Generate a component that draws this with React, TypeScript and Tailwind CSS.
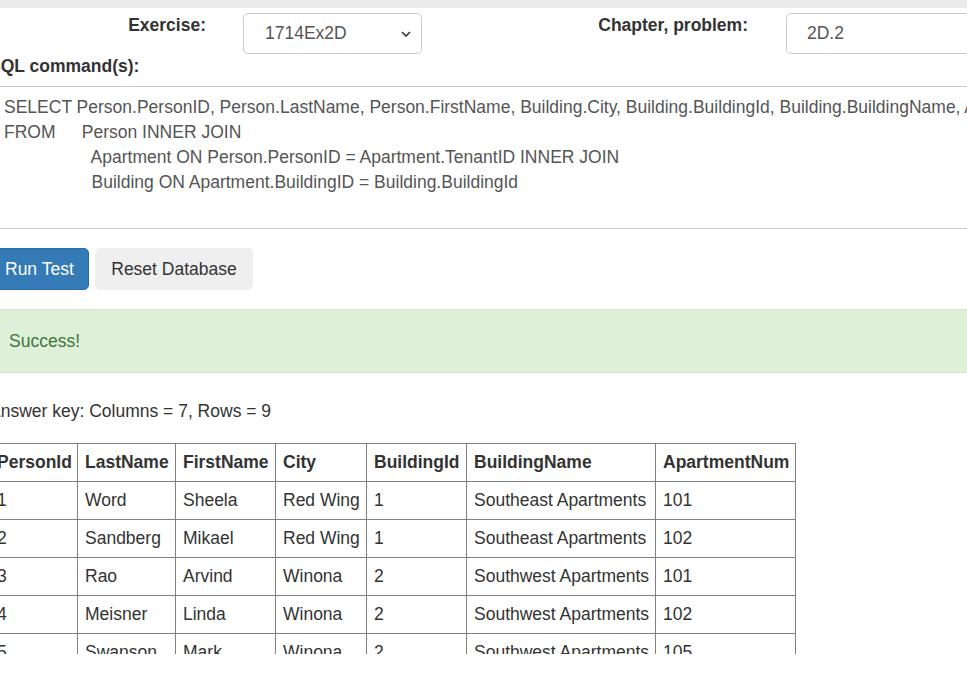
import React from 'react';

const headers = ['PersonId', 'LastName', 'FirstName', 'City', 'BuildingId', 'BuildingName', 'ApartmentNum'];
const colWidths = ['w-[88px]', 'w-[98px]', 'w-[100px]', 'w-[91px]', 'w-[100px]', 'w-[189px]', 'w-[140px]'];

const rows = [
  ['1', 'Word', 'Sheela', 'Red Wing', '1', 'Southeast Apartments', '101'],
  ['2', 'Sandberg', 'Mikael', 'Red Wing', '1', 'Southeast Apartments', '102'],
  ['3', 'Rao', 'Arvind', 'Winona', '2', 'Southwest Apartments', '101'],
  ['4', 'Meisner', 'Linda', 'Winona', '2', 'Southwest Apartments', '102'],
  ['5', 'Swanson', 'Mark', 'Winona', '2', 'Southwest Apartments', '105'],
];

const sql = `SELECT Person.PersonID, Person.LastName, Person.FirstName, Building.City, Building.BuildingId, Building.BuildingName, Apartment.ApartmentNum
FROM\tPerson INNER JOIN
\t\t  Apartment ON Person.PersonID = Apartment.TenantID INNER JOIN
\t\t  Building ON Apartment.BuildingID = Building.BuildingId`;

export default function App() {
  return (
    <div className="w-[967px] h-[673px] bg-white overflow-hidden text-[#333] text-[17.5px] leading-[25px] font-['Liberation_Sans',Arial,sans-serif]">
      <div className="h-[654px] overflow-hidden">
        {/* top strip */}
        <div className="h-[8px] bg-[#ebebeb]" />

        {/* page is scrolled a little to the right, so content starts off-screen */}
        <div className="-ml-[11px] w-[1100px]">
          {/* Exercise / chapter row */}
          <div className="flex items-start pt-[5px] h-[46px]">
            <label className="w-[217px] text-right font-bold">Exercise:</label>
            <div className="ml-[37px] w-[179px] h-[41px] border border-[#ccc] rounded-[5px] flex items-center pl-[21px] pr-[8px] text-[#555]">
              <span className="flex-1">1714Ex2D</span>
              <svg width="10" height="6" viewBox="0 0 10 6" className="mr-[2px]">
                <polyline points="1,1 5,5 9,1" fill="none" stroke="#333" strokeWidth="1.6" />
              </svg>
            </div>
            <label className="w-[326px] text-right font-bold">Chapter, problem:</label>
            <div className="ml-[38px] w-[260px] h-[41px] border border-[#ccc] rounded-l-[5px] flex items-center pl-[20px] text-[#555]">
              2D.2
            </div>
          </div>

          <label className="block font-bold">SQL command(s):</label>

          {/* SQL text box */}
          <div className="mt-[7px] h-[143px] border-y border-[#ccc] pl-[15px] pt-[8px] text-[#555] whitespace-pre overflow-hidden [tab-size:8]">
            {sql}
          </div>

          {/* buttons */}
          <div className="mt-[19px] flex">
            <button className="w-[100px] h-[42px] pl-[15px] text-left bg-[#337ab7] border border-[#2e6da4] rounded-[5px] text-white">
              Run Test
            </button>
            <button className="ml-[6px] w-[158px] h-[42px] bg-[#efefef] border border-[#efefef] rounded-[5px] text-[#333]">
              Reset Database
            </button>
          </div>

          {/* alert */}
          <div className="mt-[19px] h-[64px] bg-[#dff0d8] border border-[#d6e9c6] flex items-center pl-[19px] text-[#3c763d]">
            Success!
          </div>

          <p className="mt-[26px]">Answer key: Columns = 7, Rows = 9</p>

          <table className="mt-[19px] border-collapse table-fixed w-[806px]">
            <colgroup>
              {colWidths.map((w, i) => (
                <col key={i} className={w} />
              ))}
            </colgroup>
            <thead>
              <tr>
                {headers.map((h) => (
                  <th key={h} className="border border-[#808080] px-[7px] py-[6px] text-left font-bold whitespace-nowrap">
                    {h}
                  </th>
                ))}
              </tr>
            </thead>
            <tbody>
              {rows.map((r, i) => (
                <tr key={i}>
                  {r.map((c, j) => (
                    <td key={j} className="border border-[#808080] px-[7px] py-[6px] whitespace-nowrap">
                      {c}
                    </td>
                  ))}
                </tr>
              ))}
            </tbody>
          </table>
        </div>
      </div>
    </div>
  );
}
